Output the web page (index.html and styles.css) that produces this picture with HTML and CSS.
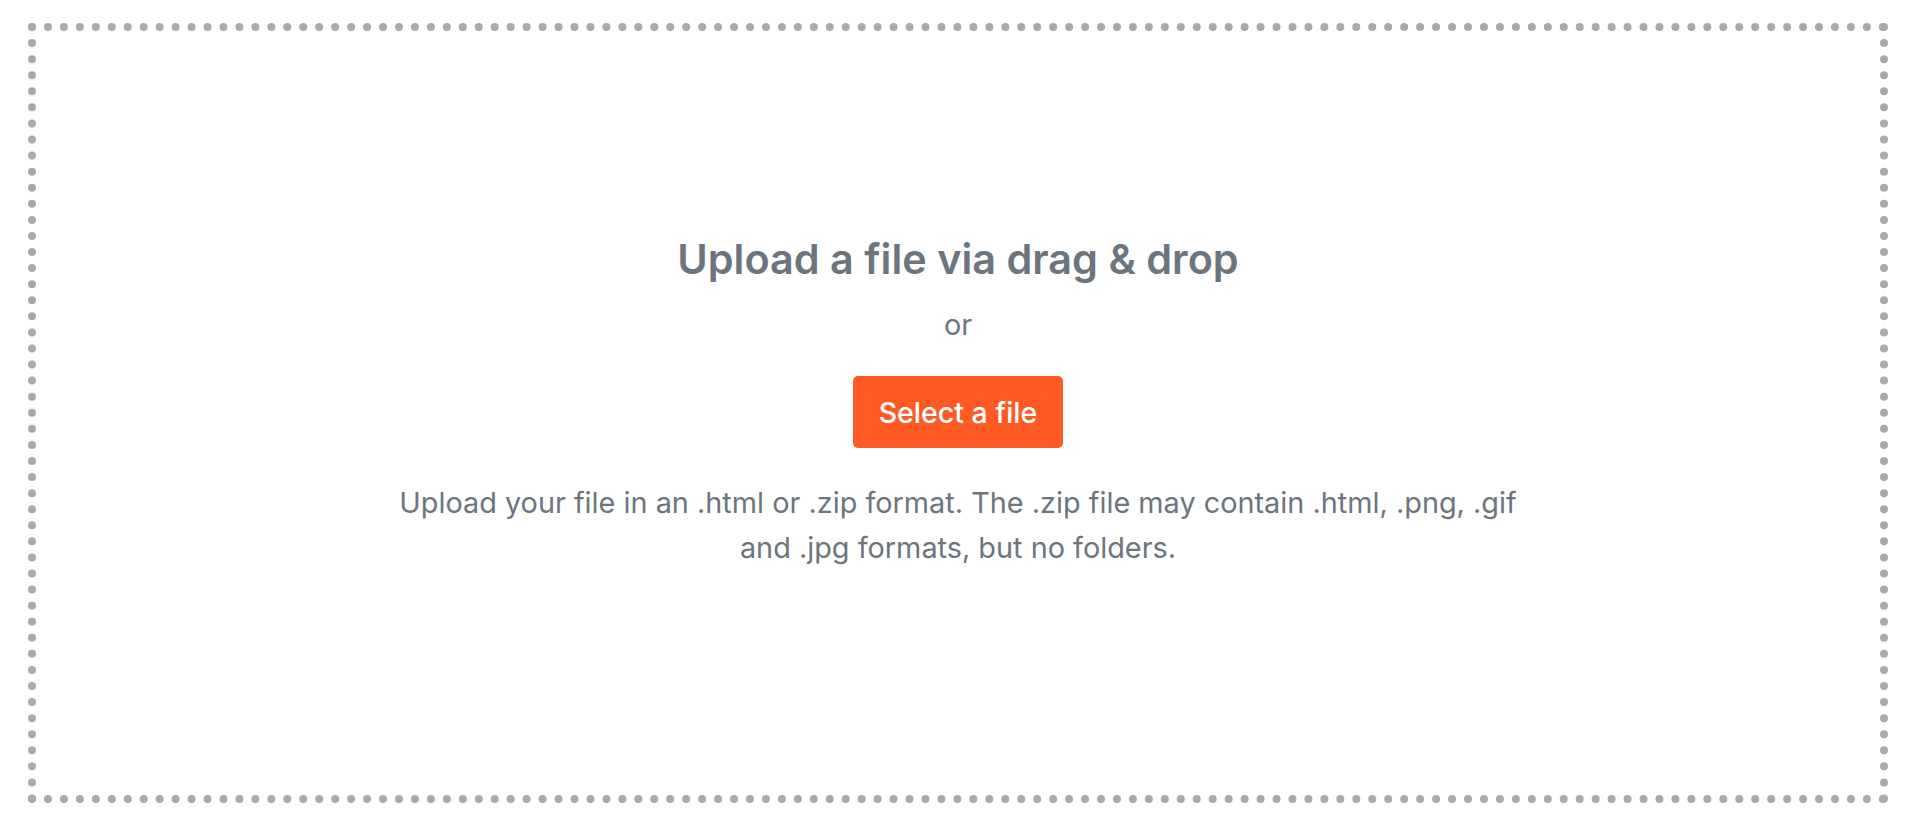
FILE: index.html
```html
<!DOCTYPE html>
<html lang="en">
<head>
<meta charset="utf-8">
<title>Upload</title>
<link rel="stylesheet" href="styles.css">
</head>
<body>
<div class="dropzone">
  <div class="content">
    <h1 class="title">Upload a file via drag &amp; drop</h1>
    <div class="or">or</div>
    <button class="select-btn" type="button">Select a file</button>
    <p class="hint">Upload your file in an .html or .zip format. The .zip file may contain .html, .png, .gif and .jpg formats, but no folders.</p>
  </div>
</div>
</body>
</html>
```
FILE: styles.css
```css
html, body {
  margin: 0;
  padding: 0;
  background: #ffffff;
}
body {
  padding: 23px 26px 23px 28px;
  font-family: Inter, "Noto Sans", "Liberation Sans", sans-serif;
  color: #6c757d;
}
.dropzone {
  box-sizing: border-box;
  height: 780px;
  border: 8px dotted #aaaaaa;
  padding-bottom: 22px;
  display: flex;
  align-items: center;
  justify-content: center;
}
.content {
  display: flex;
  flex-direction: column;
  align-items: center;
  text-align: center;
}
.title {
  margin: 0;
  font-size: 41.4px;
  font-weight: 600;
  line-height: 50px;
  color: #6c757d;
}
.or {
  margin-top: 19px;
  font-size: 28.8px;
  line-height: 43px;
}
.select-btn {
  margin-top: 30px;
  width: 210px;
  height: 72px;
  border: none;
  border-radius: 5px;
  background: #ff5a24;
  color: #ffffff;
  font-family: inherit;
  font-size: 28.5px;
  font-weight: 500;
  cursor: pointer;
}
.hint {
  margin: 32px 0 0;
  max-width: 1160px;
  font-size: 28.85px;
  line-height: 45px;
}
```
